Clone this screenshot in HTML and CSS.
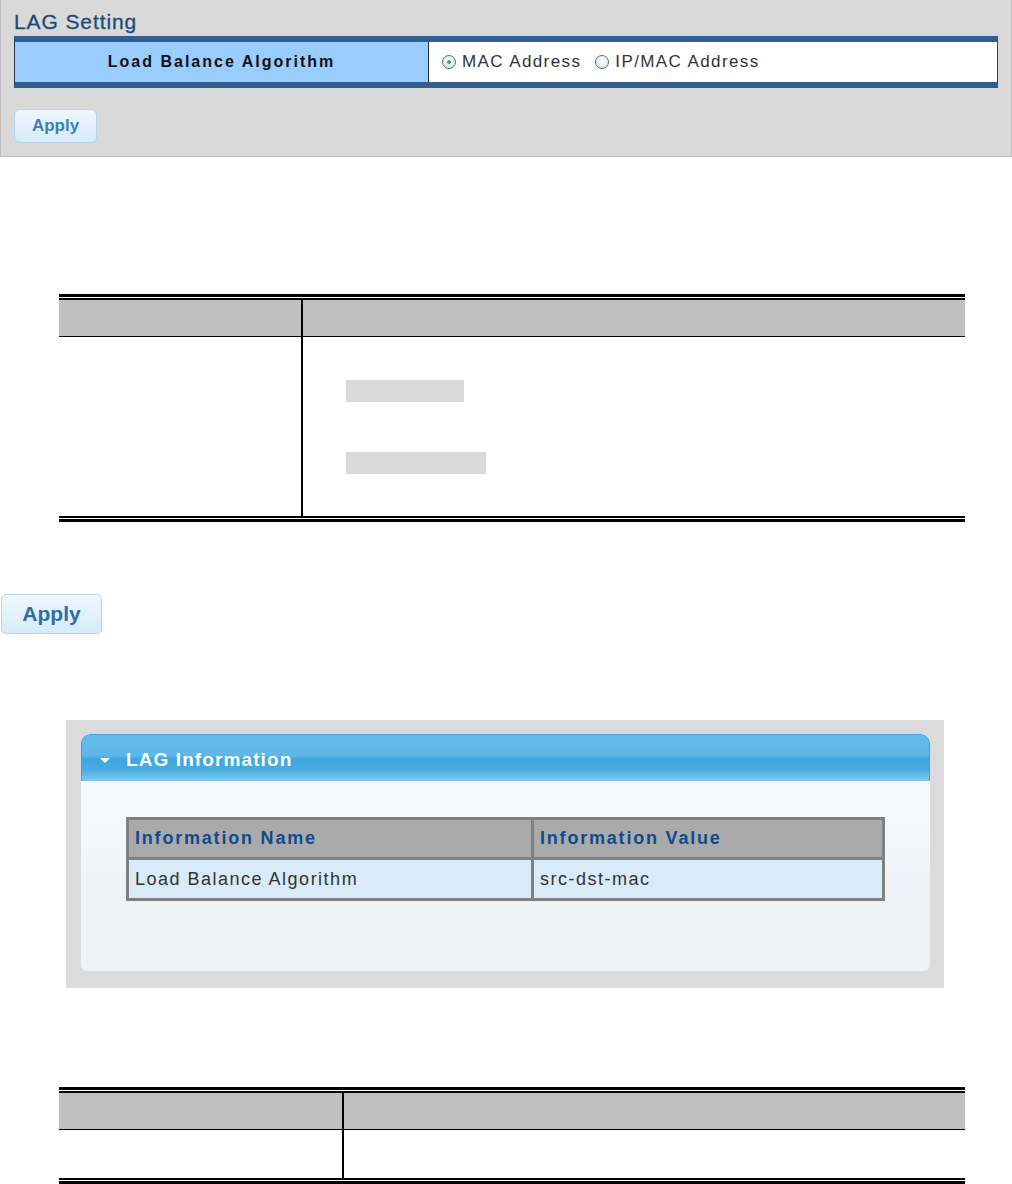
FILE: index.html
```html
<!DOCTYPE html>
<html>
<head>
<meta charset="utf-8">
<title>LAG Setting</title>
<link rel="stylesheet" href="styles.css">
</head>
<body>
<div class="setting-panel">
  <div class="setting-title">LAG Setting</div>
  <div class="setting-table">
    <div class="setting-label">Load Balance Algorithm</div>
    <div class="setting-value">
      <label class="radio-opt"><span class="radio checked"></span>MAC Address</label>
      <label class="radio-opt"><span class="radio"></span>IP/MAC Address</label>
    </div>
  </div>
  <div class="btn btn-small">Apply</div>
</div>

<div class="doc-table doc-table-1">
  <div class="doc-inner">
    <div class="doc-head">
      <div class="doc-cell doc-left"></div>
      <div class="doc-cell doc-right"></div>
    </div>
    <div class="doc-body body-1">
      <div class="doc-cell doc-left"></div>
      <div class="doc-cell doc-right">
        <div class="placeholder ph-1"></div>
        <div class="placeholder ph-2"></div>
      </div>
    </div>
  </div>
</div>

<div class="btn btn-large">Apply</div>

<div class="info-outer">
  <div class="info-panel">
    <div class="info-header"><span class="tri"></span>LAG Information</div>
    <div class="info-body">
      <div class="info-table">
        <div class="info-row info-head">
          <div class="info-cell info-c1">Information Name</div>
          <div class="info-cell info-c2">Information Value</div>
        </div>
        <div class="info-row info-data">
          <div class="info-cell info-c1">Load Balance Algorithm</div>
          <div class="info-cell info-c2">src-dst-mac</div>
        </div>
      </div>
    </div>
  </div>
</div>

<div class="doc-table doc-table-2">
  <div class="doc-inner">
    <div class="doc-head head-2">
      <div class="doc-cell doc-left2"></div>
      <div class="doc-cell doc-right"></div>
    </div>
    <div class="doc-body body-2">
      <div class="doc-cell doc-left2"></div>
      <div class="doc-cell doc-right"></div>
    </div>
  </div>
</div>
</body>
</html>
```
FILE: styles.css
```css
html, body {
  margin: 0;
  padding: 0;
  background: #ffffff;
  font-family: "Liberation Sans", Arial, sans-serif;
}

/* ---------- top setting panel ---------- */
.setting-panel {
  width: 997px;
  height: 156px;
  background: #d9d9d9;
  border-left: 1px solid #bdbdbd;
  border-right: 1px solid #bdbdbd;
  border-bottom: 1px solid #bdbdbd;
  padding: 0 0 0 13px;
  box-sizing: content-box;
  overflow: hidden;
}

.setting-title {
  margin-top: 11px;
  height: 22px;
  line-height: 22px;
  font-size: 21px;
  letter-spacing: 0.9px;
  color: #1f4a72;
  -webkit-text-stroke: 0.3px #1f4a72;
}

.setting-table {
  margin-top: 3px;
  width: 982px;
  height: 40px;
  display: flex;
  border-top: 6px solid #30608f;
  border-bottom: 6px solid #30608f;
  border-left: 1px solid #2a3340;
  border-right: 1px solid #3a3f46;
  box-sizing: content-box;
}

.setting-label {
  width: 413px;
  background: #99ccff;
  border-right: 1px solid #1e2c3a;
  display: flex;
  align-items: center;
  justify-content: center;
  font-weight: bold;
  font-size: 16px;
  letter-spacing: 2px;
  color: #111111;
}
.setting-value {
  flex: 1;
  background: #ffffff;
  display: flex;
  align-items: center;
  padding-left: 13px;
  font-size: 17px;
  letter-spacing: 1.4px;
  color: #333333;
}
.radio-opt {
  display: flex;
  align-items: center;
  margin-right: 14px;
}
.radio-opt + .radio-opt { margin-right: 0; }
.radio {
  width: 14px;
  height: 14px;
  border: 1px solid #4a6f8e;
  border-radius: 50%;
  background: radial-gradient(circle at 50% 40%, #ffffff 0%, #e8eef3 60%, #c9d3dc 100%);
  margin-right: 6px;
  position: relative;
  box-sizing: border-box;
}
.radio.checked::after {
  content: "";
  position: absolute;
  left: 4px;
  top: 4px;
  width: 4px;
  height: 4px;
  border-radius: 50%;
  background: #2fb34a;
}

/* ---------- buttons ---------- */
.btn {
  display: flex;
  align-items: center;
  justify-content: center;
  font-weight: bold;
  border: 1px solid #b6d5ec;
  border-radius: 6px;
  background: linear-gradient(#eef7fe, #d6ebfa);
  box-sizing: border-box;
}
.btn-small {
  margin-top: 21px;
  width: 83px;
  height: 34px;
  font-size: 17px;
  color: #3c80b6;
}
.btn-large {
  margin-top: 72px;
  margin-left: 1px;
  width: 101px;
  height: 40px;
  font-size: 21px;
  color: #2d6ea6;
  border-radius: 5px;
}

/* ---------- doc tables ---------- */
.doc-table {
  margin-left: 59px;
  width: 906px;
  border-top: 3px solid #000;
  border-bottom: 3px solid #000;
  padding: 1px 0;
  box-sizing: content-box;
}
.doc-table-1 { margin-top: 137px; }
.doc-table-2 { margin-top: 99px; }

.doc-inner {
  border-top: 2px solid #000;
  border-bottom: 2px solid #000;
}
.doc-head {
  display: flex;
  height: 36px;
  background: #c0c0c0;
  border-bottom: 1px solid #000;
}
.doc-body {
  display: flex;
  background: #ffffff;
}
.body-1 { height: 179px; }
.head-2 { height: 36px; }
.body-2 { height: 48px; }

.doc-cell { box-sizing: border-box; }
.doc-left {
  width: 244px;
  border-right: 2px solid #000;
}
.doc-left2 {
  width: 285px;
  border-right: 2px solid #000;
}
.doc-right {
  flex: 1;
  padding-left: 43px;
}
.placeholder {
  background: #d9d9d9;
  height: 22px;
}
.ph-1 { width: 118px; margin-top: 43px; }
.ph-2 { width: 140px; margin-top: 50px; }

/* ---------- LAG info panel ---------- */
.info-outer {
  margin-top: 86px;
  margin-left: 66px;
  width: 878px;
  background: #dbdbdb;
  padding: 14px 14px 17px 15px;
  box-sizing: border-box;
}
.info-panel {
  border-radius: 9px 9px 6px 6px;
  overflow: hidden;
  background: linear-gradient(#f7f9fb 0%, #f5f8fa 45%, #eef3f7 60%, #eff3f6 100%);
}
.info-header {
  height: 47px;
  border: 1px solid #3b9fe0;
  border-bottom: none;
  border-radius: 9px 9px 0 0;
  box-sizing: border-box;
  background: linear-gradient(#67bbea 0%, #5fb7e8 45%, #3aa7e0 52%, #47addf 75%, #82caee 100%);
  display: flex;
  align-items: center;
  padding-left: 18px;
  padding-top: 3px;
  color: #ffffff;
  font-weight: bold;
  font-size: 19px;
  letter-spacing: 1.1px;
}
.tri {
  width: 0;
  height: 0;
  border-left: 5px solid transparent;
  border-right: 5px solid transparent;
  border-top: 5px solid #ffffff;
  margin-right: 16px;
  margin-top: 1px;
}
.info-body {
  padding: 36px 45px 70px 45px;
}
.info-table {
  border: 3px solid #808080;
  border-bottom: none;
}
.info-row {
  display: flex;
  border-bottom: 3px solid #808080;
  box-sizing: border-box;
}
.info-head {
  height: 40px;
  background: #aaaaaa;
}
.info-data {
  height: 41px;
  background: #d9eaf8;
}
.info-cell {
  display: flex;
  align-items: center;
  padding-left: 6px;
  box-sizing: border-box;
}
.info-c1 {
  width: 405px;
  border-right: 3px solid #808080;
}
.info-c2 { flex: 1; }
.info-head .info-cell {
  font-weight: bold;
  font-size: 18px;
  letter-spacing: 1.8px;
  color: #0f4a8e;
}
.info-data .info-cell {
  font-size: 18px;
  letter-spacing: 1.5px;
  color: #333333;
}
```
